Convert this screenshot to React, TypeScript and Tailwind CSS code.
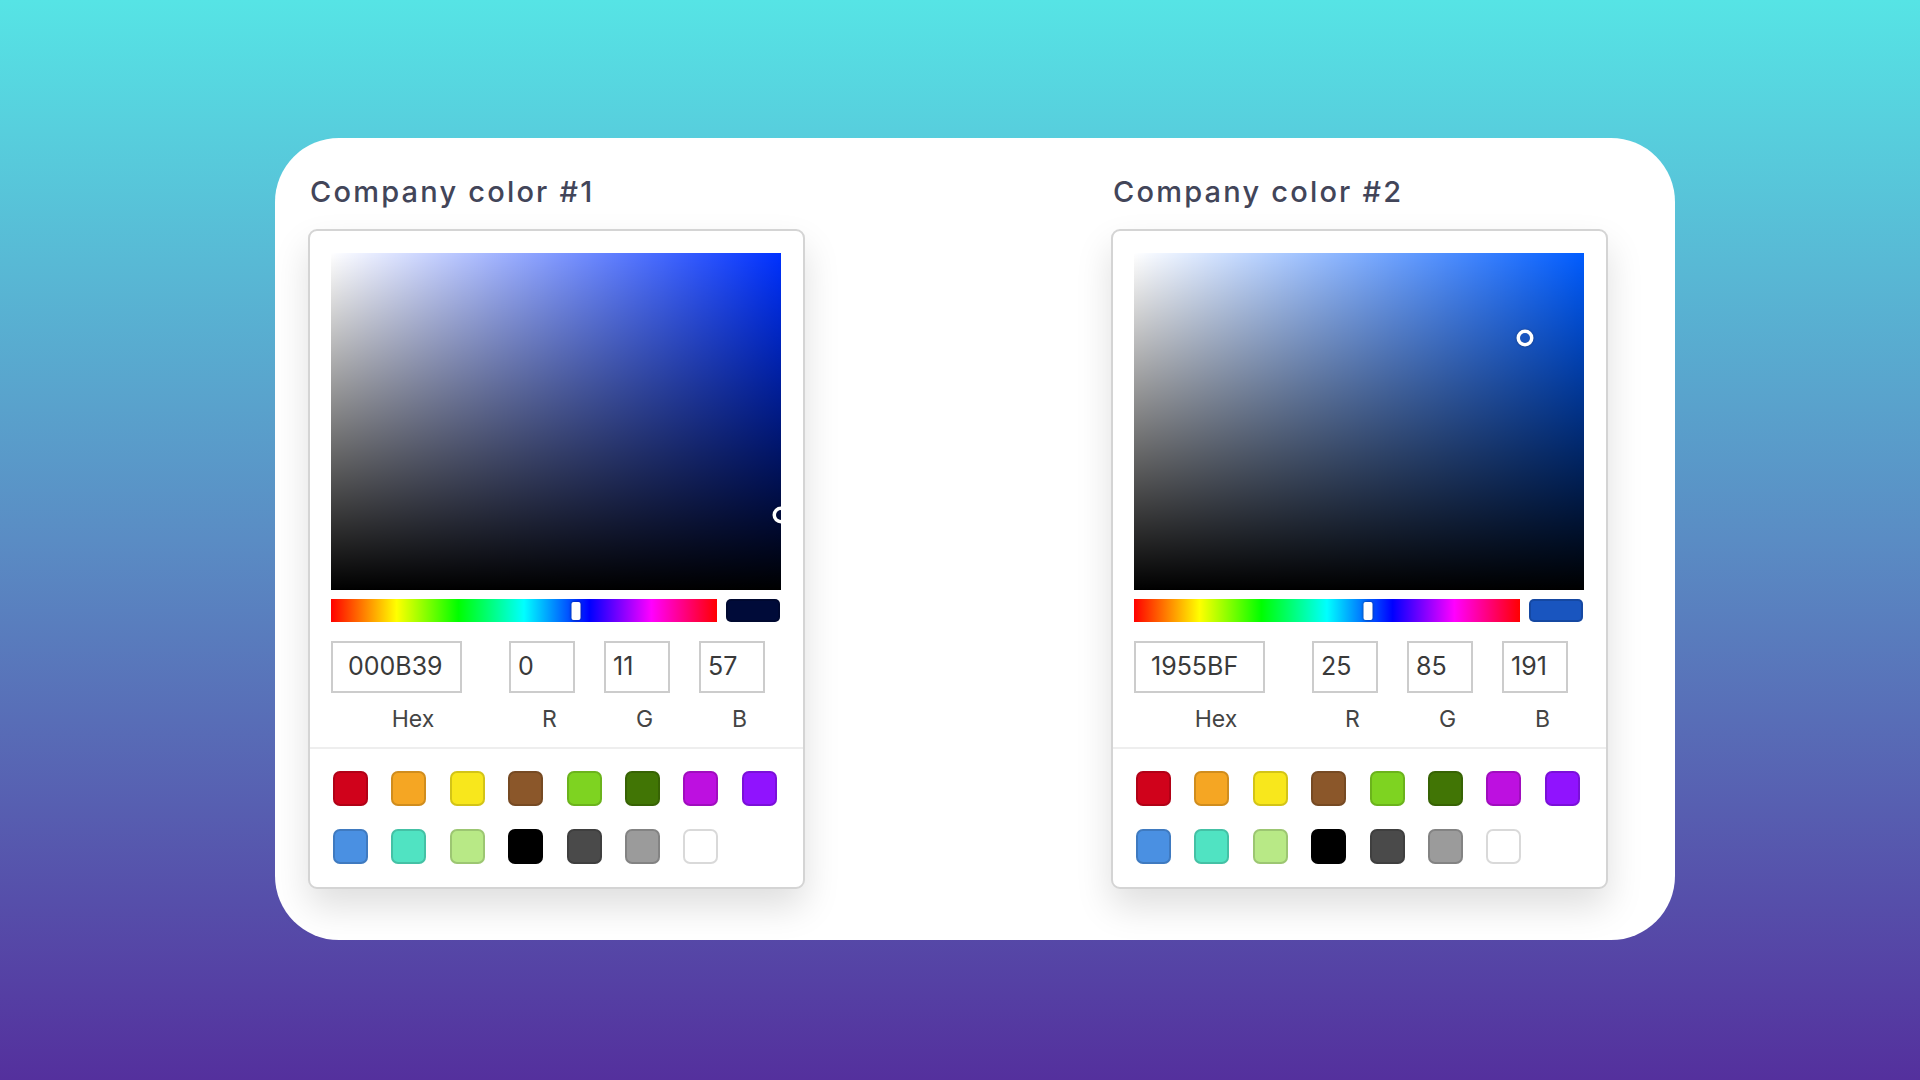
import React from "react";

const PRESETS = [
  "#D0021B",
  "#F5A623",
  "#F8E71C",
  "#8B572A",
  "#7ED321",
  "#417505",
  "#BD10E0",
  "#9013FE",
  "#4A90E2",
  "#50E3C2",
  "#B8E986",
  "#000000",
  "#4A4A4A",
  "#9B9B9B",
  "#FFFFFF",
];

// rgb -> hsv, used to place the pointers
const toHsv = (r: number, g: number, b: number) => {
  const max = Math.max(r, g, b);
  const min = Math.min(r, g, b);
  const d = max - min;
  let h = 0;
  if (d !== 0) {
    if (max === r) h = ((g - b) / d) % 6;
    else if (max === g) h = (b - r) / d + 2;
    else h = (r - g) / d + 4;
    h *= 60;
    if (h < 0) h += 360;
  }
  return { h, s: max === 0 ? 0 : d / max, v: max / 255 };
};

type PickerProps = { hex: string; r: number; g: number; b: number };

const Picker = ({ hex, r, g, b }: PickerProps) => {
  const { h, s, v } = toHsv(r, g, b);
  return (
    <div className="w-[497px] rounded-[9px] border-2 border-[#d4d4d4] bg-white shadow-[0_18px_36px_rgba(0,0,0,0.13)]">
      <div className="px-[21px] pt-[22px]">
        <div
          className="relative h-[337px] w-[450px] overflow-hidden"
          style={{ backgroundColor: `hsl(${h}, 100%, 50%)` }}
        >
          <div className="absolute inset-0 bg-[linear-gradient(to_right,#fff,rgba(255,255,255,0))]" />
          <div className="absolute inset-0 bg-[linear-gradient(to_top,#000,rgba(0,0,0,0))]" />
          <div
            className="absolute h-[10px] w-[10px] -translate-x-1/2 -translate-y-1/2 rounded-full shadow-[0_0_0_3.5px_#fff,0_0_2px_4px_rgba(0,0,0,0.25)]"
            style={{ left: `${s * 100}%`, top: `${(1 - v) * 100}%` }}
          />
        </div>

        <div className="mt-[9px] flex gap-[9px]">
          <div className="relative h-[23px] w-[386px] bg-[linear-gradient(to_right,#f00_0%,#ff0_17%,#0f0_33%,#0ff_50%,#00f_67%,#f0f_83%,#f00_100%)]">
            <div
              className="absolute top-[3px] h-[18px] w-[9px] -translate-x-1/2 rounded-[2px] bg-white shadow-[0_0_3px_rgba(0,0,0,0.5)]"
              style={{ left: `${(h / 360) * 100}%` }}
            />
          </div>
          <div
            className="h-[23px] w-[54px] rounded-[5px] shadow-[inset_0_0_0_2px_rgba(0,0,0,0.15)]"
            style={{ backgroundColor: `#${hex}` }}
          />
        </div>

        <div className="mt-[19px] flex font-['Inter',sans-serif]">
          <Field value={hex} label="Hex" wide />
          <Field value={String(r)} label="R" />
          <Field value={String(g)} label="G" />
          <Field value={String(b)} label="B" />
        </div>
      </div>

      <div className="mt-[13px] flex flex-wrap border-t-2 border-[#eeeeee] pl-[23px] pt-[22px]">
        {PRESETS.map((c) => (
          <div
            key={c}
            className="mb-[23px] mr-[23.4px] h-[35px] w-[35px] rounded-[7px] shadow-[inset_0_0_0_2px_rgba(0,0,0,0.15)]"
            style={{ backgroundColor: c }}
          />
        ))}
      </div>
    </div>
  );
};

const Field = ({
  value,
  label,
  wide,
}: {
  value: string;
  label: string;
  wide?: boolean;
}) => (
  <div className={wide ? "w-[164px]" : "w-[95px] pl-[14px]"}>
    <div
      className={`flex h-[52px] items-center border-2 border-[#cccccc] text-[25px] text-[#3a3a3a] ${
        wide ? "w-[131px] pl-[15px]" : "w-[66px] pl-[7px]"
      }`}
    >
      {value}
    </div>
    <div className="mt-[11px] text-center text-[23px] leading-[30px] text-[#444]">
      {label}
    </div>
  </div>
);

const ColorColumn = ({
  title,
  ...rest
}: PickerProps & { title: string }) => (
  <div className="flex flex-col">
    <div className="ml-[2px] font-['Inter',sans-serif] text-[29px] font-medium leading-[36px] tracking-[2.2px] text-[#424559]">
      {title}
    </div>
    <div className="mt-[19px]">
      <Picker {...rest} />
    </div>
  </div>
);

export default function App() {
  return (
    <div className="h-[1080px] w-[1920px] overflow-hidden bg-[linear-gradient(to_bottom,#56e4e5,#5a8cc4_50%,#54309d)] pl-[275px] pt-[138px]">
      <div className="flex h-[802px] w-[1400px] gap-[306px] rounded-[64px] bg-white pl-[33px] pt-[36px]">
        <ColorColumn title="Company color #1" hex="000B39" r={0} g={11} b={57} />
        <ColorColumn title="Company color #2" hex="1955BF" r={25} g={85} b={191} />
      </div>
    </div>
  );
}
